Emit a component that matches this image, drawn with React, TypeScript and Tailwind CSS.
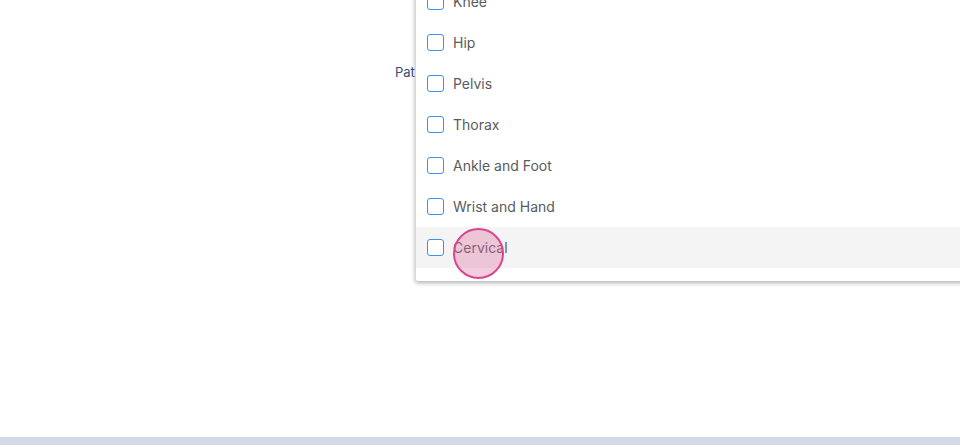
import React from 'react';

const parts = ['Knee', 'Hip', 'Pelvis', 'Thorax', 'Ankle and Foot', 'Wrist and Hand', 'Cervical'];

const Option = ({ label, active }: { label: string; active?: boolean }) => (
  <label className={`flex h-[41px] items-center gap-[9px] pl-[11px] ${active ? 'bg-[#f4f4f4]' : 'bg-white'}`}>
    <span className="block h-[17px] w-[17px] shrink-0 rounded-[3px] border border-[#3d8ff0] bg-white" />
    <span className="text-[14px] text-[#585c62]">{label}</span>
  </label>
);

export default function App() {
  return (
    <div
      className="relative flex h-[445px] w-[960px] flex-col overflow-hidden bg-white"
      style={{ fontFamily: 'Inter, "Open Sans", sans-serif' }}
    >
      <div className="flex-1">
        <div className="pl-[395px] pt-[63px] text-[13px] text-[#3c4a78]">Patient body part</div>
      </div>
      <div className="h-[8px] bg-[#d4d9e8]" />

      {/* dropdown panel */}
      <div className="absolute left-[415px] top-[-19px] w-[560px] rounded-b-[3px] border-l border-[#d8d8d8] bg-white pb-[13px] shadow-[0_2px_4px_rgba(0,0,0,0.3)]">
        {parts.map((p) => (
          <Option key={p} label={p} active={p === 'Cervical'} />
        ))}
      </div>

      {/* click indicator */}
      <div className="absolute left-[453px] top-[228px] h-[51px] w-[51px] rounded-full border-2 border-[#d9458e] bg-[rgba(222,110,160,0.35)]" />
    </div>
  );
}
